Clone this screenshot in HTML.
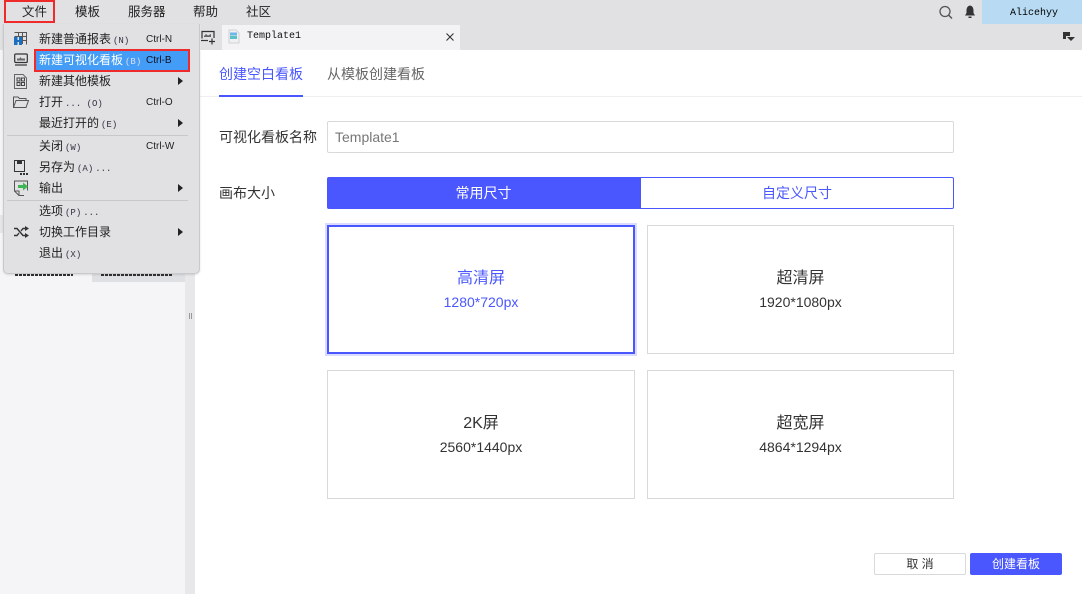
<!DOCTYPE html>
<html><head><meta charset="utf-8"><style>
html,body{margin:0;padding:0;width:1082px;height:594px;overflow:hidden;background:#fff}
body{position:relative;font-family:"Liberation Sans","Noto Sans CJK SC",sans-serif;color:#333}
div,span.a,svg{position:absolute}
.t{white-space:nowrap}
.top{font-size:12.5px;top:4px;line-height:16px;color:#222}
.mi{left:39px;font-size:12px;line-height:16px;color:#222;white-space:nowrap}
.mi i{font-style:normal;font-family:"Liberation Mono",monospace;font-size:9px;margin-left:2px;color:#334}
.sc{left:146px;font-size:10px;line-height:14px;color:#222;white-space:nowrap}
.ar{left:178px;width:0;height:0;border-left:5px solid #222;border-top:4px solid transparent;border-bottom:4px solid transparent}
.card{width:305px;height:127px;border:1px solid #d9d9d9;background:#fff;text-align:center}
.card .h{left:0;right:0;top:42px;font-size:16px;line-height:22px;color:#333}
.card .s{left:0;right:0;top:67px;font-size:14px;line-height:18px;color:#333}
.bar{height:2px;background:repeating-linear-gradient(90deg,#333 0 3px,transparent 3px 4px)}
</style></head><body>
<div style="left:0;top:0;width:1082px;height:50px;background:#e1e1e3"></div>
<div style="left:0;top:50px;width:185px;height:544px;background:#f5f5f7"></div>
<div style="left:185px;top:50px;width:10px;height:544px;background:#e8e8ea"></div>
<div style="left:189px;top:313px;width:1px;height:6px;background:#999"></div>
<div style="left:191px;top:313px;width:1px;height:6px;background:#999"></div>
<div style="left:0;top:215px;width:4px;height:18px;background:#e6e6e8"></div>
<div style="left:92px;top:262px;width:93px;height:20px;background:#dfe0e4"></div>
<div class="bar" style="left:15px;top:274px;width:58px"></div>
<div class="bar" style="left:101px;top:274px;width:72px"></div>

<!-- top menu -->
<div class="top t" style="left:22px">文件</div>
<div class="top t" style="left:75px">模板</div>
<div class="top t" style="left:128px">服务器</div>
<div class="top t" style="left:193px">帮助</div>
<div class="top t" style="left:246px">社区</div>
<svg style="left:938px;top:5px" width="16" height="15" viewBox="0 0 16 15"><circle cx="7" cy="6.5" r="5" fill="none" stroke="#555" stroke-width="1.3"/><path d="M10.5 10l3.5 3.5" stroke="#555" stroke-width="1.5"/></svg>
<svg style="left:964px;top:5px" width="12" height="14" viewBox="0 0 12 14"><path d="M6 0.5C3.5 1 2.5 3 2.5 5.5V8L1 10.5H11L9.5 8V5.5C9.5 3 8.5 1 6 0.5Z" fill="#333"/><rect x="4.5" y="11.5" width="3" height="1.5" fill="#333"/></svg>
<div style="left:982px;top:0;width:100px;height:24px;background:#b8dbf3"></div>
<div class="t" style="left:1010px;top:6px;font-family:'Liberation Mono',monospace;font-size:10px;line-height:15px;color:#000">Alicehyy</div>

<!-- tab row -->
<div style="left:200px;top:25px;width:1px;height:25px;background:#eee"></div>
<svg style="left:200px;top:30px" width="16" height="15" viewBox="0 0 16 15" fill="none" stroke="#333"><path d="M2 8.5V1.5H14V8" stroke-width="1.2"/><path d="M1 10.5H8" stroke-width="1.2"/><path d="M4 6l2-2 2 1.5 3-1.5V7H4z" fill="#666" stroke="none"/><path d="M12 8.5v6M9 11.5h6" stroke-width="1.2"/></svg>
<div style="left:222px;top:25px;width:238px;height:25px;background:#f3f3f5"></div>
<svg style="left:228px;top:29px" width="12" height="15" viewBox="0 0 12 15"><path d="M1 1H8L11 4V14H1Z" fill="#eef0f2" stroke="#c8c8c8" stroke-width="0.8"/><rect x="2" y="3.5" width="7" height="2.5" fill="#6eb5ea"/><rect x="2" y="6.5" width="7" height="3.5" fill="#5cc0c8"/></svg>
<div class="t" style="left:247px;top:29px;font-family:'Liberation Mono',monospace;font-size:10px;line-height:15px;color:#111">Template1</div>
<svg style="left:446px;top:33px" width="8" height="8" viewBox="0 0 8 8"><path d="M0.5 0.5L7.5 7.5M7.5 0.5L0.5 7.5" stroke="#333" stroke-width="1.1"/></svg>
<div style="left:1063px;top:32px;width:7px;height:7px;background:#333"></div>
<div style="left:1066px;top:36px;width:10px;height:6px;background:#e1e1e3"></div>
<div style="left:1067px;top:37px;width:0;height:0;border-top:4px solid #333;border-left:4px solid transparent;border-right:4px solid transparent"></div>

<!-- main -->
<div style="left:195px;top:96px;width:887px;height:1px;background:#efefef"></div>
<div class="t" style="left:219px;top:64px;font-size:14px;line-height:20px;color:#4a57ff">创建空白看板</div>
<div class="t" style="left:327px;top:64px;font-size:14px;line-height:20px;color:#666">从模板创建看板</div>
<div style="left:219px;top:95px;width:84px;height:2px;background:#4a57ff"></div>
<div class="t" style="left:219px;top:127px;font-size:14px;line-height:20px;color:#333">可视化看板名称</div>
<div style="left:327px;top:121px;width:625px;height:30px;border:1px solid #d9d9d9;border-radius:2px;background:#fff"></div>
<div class="t" style="left:335px;top:127px;font-size:14px;line-height:20px;color:#777">Template1</div>
<div class="t" style="left:219px;top:183px;font-size:14px;line-height:20px;color:#333">画布大小</div>
<div style="left:327px;top:177px;width:313px;height:32px;background:#4a57ff;border-radius:2px 0 0 2px;color:#fff;font-size:14px;line-height:32px;text-align:center">常用尺寸</div>
<div style="left:640px;top:177px;width:312px;height:30px;border:1px solid #4a57ff;border-radius:0 2px 2px 0;color:#4a57ff;font-size:14px;line-height:31px;text-align:center;background:#fff">自定义尺寸</div>

<div class="card" style="left:327px;top:225px;width:304px;height:125px;border:2px solid #4a57ff;box-shadow:0 0 0 2px #d9dcff;color:#4a57ff">
 <div class="h" style="top:41px;color:#4a57ff">高清屏</div><div class="s" style="top:66px;color:#4a57ff">1280*720px</div></div>
<div class="card" style="left:647px;top:225px;height:127px"><div class="h">超清屏</div><div class="s">1920*1080px</div></div>
<div class="card" style="left:327px;top:370px;height:127px;width:306px"><div class="h">2K屏</div><div class="s">2560*1440px</div></div>
<div class="card" style="left:647px;top:370px;height:127px"><div class="h">超宽屏</div><div class="s">4864*1294px</div></div>

<div style="left:874px;top:553px;width:90px;height:20px;border:1px solid #d9d9d9;border-radius:2px;font-size:12px;line-height:20px;text-align:center;color:#333;background:#fff">取 消</div>
<div style="left:970px;top:553px;width:92px;height:22px;background:#4a57ff;border-radius:2px;font-size:12px;line-height:22px;text-align:center;color:#fff">创建看板</div>

<!-- file menu -->
<div style="left:3px;top:24px;width:195px;height:249px;background:#e1e1e3;border:1px solid #c9c9cb;border-top:0;border-radius:0 0 5px 5px;box-shadow:0 1px 2px rgba(0,0,0,.12)"></div>
<div style="left:4px;top:0;width:47px;height:19px;border:2px solid #ee2a2a"></div>
<div style="left:36px;top:51px;width:152px;height:19px;background:#439cf5"></div>
<div style="left:34px;top:49px;width:152px;height:19px;border:2px solid #ee2a2a"></div>

<div class="mi" style="top:31px">新建普通报表<i>(N)</i></div><div class="sc" style="top:33px">Ctrl-N</div>
<div class="mi" style="top:52px;color:#fff">新建可视化看板<i style="color:#dde">(B)</i></div><div class="sc" style="top:54px;color:#112">Ctrl-B</div>
<div class="mi" style="top:73px">新建其他模板</div><div class="ar" style="top:77px"></div>
<div class="mi" style="top:94px">打开<i>...</i> <i>(O)</i></div><div class="sc" style="top:96px">Ctrl-O</div>
<div class="mi" style="top:115px">最近打开的<i>(E)</i></div><div class="ar" style="top:119px"></div>
<div style="left:7px;top:135px;width:181px;height:1px;background:#c8c8ca"></div>
<div class="mi" style="top:138px">关闭<i>(W)</i></div><div class="sc" style="top:140px">Ctrl-W</div>
<div class="mi" style="top:159px">另存为<i>(A)</i><i>...</i></div>
<div class="mi" style="top:180px">输出</div><div class="ar" style="top:184px"></div>
<div style="left:7px;top:200px;width:181px;height:1px;background:#c8c8ca"></div>
<div class="mi" style="top:203px">选项<i>(P)</i><i>...</i></div>
<div class="mi" style="top:224px">切换工作目录</div><div class="ar" style="top:228px"></div>
<div class="mi" style="top:245px">退出<i>(X)</i></div>

<!-- menu icons -->
<svg style="left:14px;top:32px" width="13" height="13" viewBox="0 0 13 13"><path d="M0.5 0.5H12.5V12.5M4.5 0.5V5M8.5 0.5V12M0.5 4.5H12.5M8.5 8.5H12.5" fill="none" stroke="#555"/><rect x="0" y="5" width="3.5" height="8" fill="#1c6fc0"/><rect x="5" y="5" width="3" height="8" fill="#1c6fc0"/><rect x="3" y="8" width="2" height="2" fill="#1c6fc0"/></svg>
<svg style="left:14px;top:53px" width="14" height="13" viewBox="0 0 14 13"><rect x="0.7" y="1" width="12.6" height="8.5" rx="1" fill="none" stroke="#333" stroke-width="1.2"/><path d="M3 7.5V5.5h2.5l1-1.5 1 1.5H11V7.5Z" fill="#666"/><path d="M1 12H13" stroke="#333" stroke-width="1.2"/></svg>
<svg style="left:14px;top:74px" width="13" height="15" viewBox="0 0 13 15"><path d="M0.5 0.5H9L12.5 4V14.5H0.5Z" fill="none" stroke="#666"/><rect x="3" y="4" width="3" height="3" fill="none" stroke="#444"/><rect x="7.5" y="4" width="3" height="3" fill="none" stroke="#444"/><rect x="3" y="8.5" width="3" height="3" fill="none" stroke="#444"/><rect x="7.5" y="8.5" width="3" height="3" fill="none" stroke="#444"/></svg>
<svg style="left:13px;top:96px" width="16" height="12" viewBox="0 0 16 12"><path d="M0.5 11.5V1H5L6.5 2.5H13V4.5M0.5 11.5L3 4.5H15.5L13 11.5Z" fill="none" stroke="#555"/></svg>
<svg style="left:14px;top:160px" width="15" height="15" viewBox="0 0 15 15"><path d="M0.5 0.5H10.5V11.5H0.5Z" fill="none" stroke="#333"/><rect x="3" y="0.5" width="5" height="3.5" fill="#333"/><rect x="6" y="13" width="2" height="2" fill="#333"/><rect x="9" y="13" width="2" height="2" fill="#333"/><rect x="12" y="13" width="2" height="2" fill="#333"/></svg>
<svg style="left:14px;top:180px" width="15" height="16" viewBox="0 0 15 16"><path d="M13.5 10.5V1H0.5V11L5 15.5H10" fill="none" stroke="#555"/><path d="M0.5 11H5V15" fill="none" stroke="#555"/><path d="M4 5H9V2.5L14 6.5L9 10.5V8H4Z" fill="#3fb553"/></svg>
<svg style="left:14px;top:226px" width="15" height="12" viewBox="0 0 15 12"><path d="M0 2.5H3L9 9.5H12M0 9.5H3L5 7M7 5L9 2.5H12" fill="none" stroke="#333" stroke-width="1.4"/><path d="M11 0L15 2.5L11 5ZM11 7L15 9.5L11 12Z" fill="#333"/></svg>
</body></html>
